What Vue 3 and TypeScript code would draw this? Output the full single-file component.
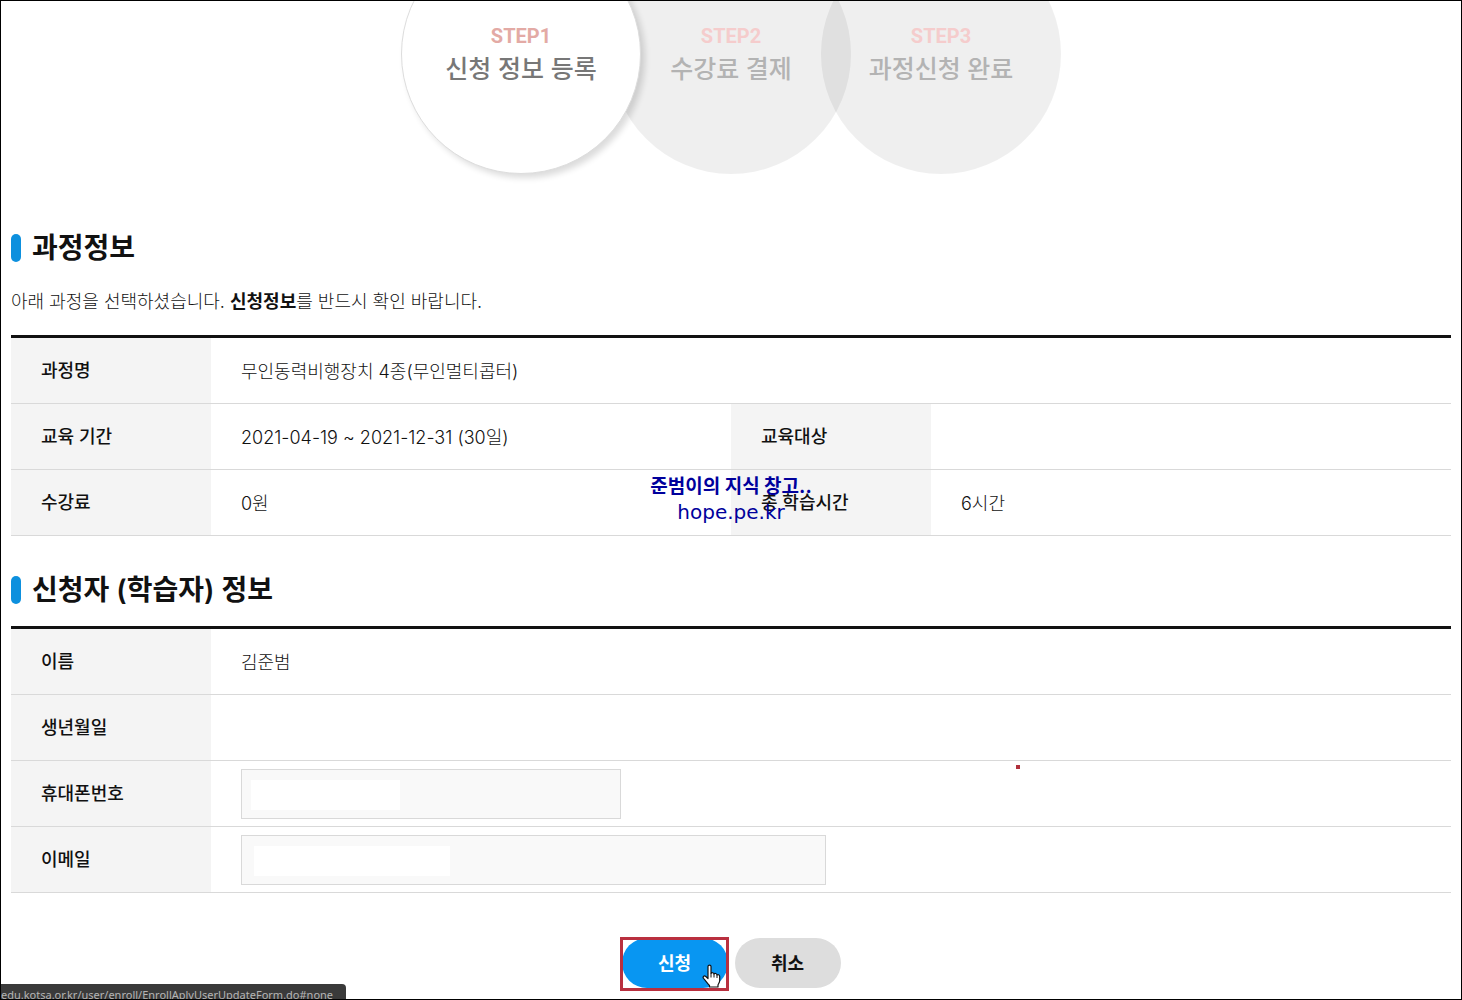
<script setup lang="ts">
import { ref } from 'vue'

interface Step {
  label: string
  title: string
  active: boolean
}

const steps: Step[] = [
  { label: 'STEP1', title: '신청 정보 등록', active: true },
  { label: 'STEP2', title: '수강료 결제', active: false },
  { label: 'STEP3', title: '과정신청 완료', active: false },
]

const phone = ref('')
const email = ref('')
</script>

<template>
  <div class="frame">
    <ol class="steps">
      <li v-for="step in steps" :key="step.label" class="step" :class="{ active: step.active }">
        <span class="step-label">{{ step.label }}</span>
        <span class="step-title">{{ step.title }}</span>
      </li>
    </ol>

    <main class="content">
      <h2 class="heading course-heading">과정정보</h2>
      <p class="notice">아래 과정을 선택하셨습니다. <strong>신청정보</strong>를 반드시 확인 바랍니다.</p>

      <div class="course">
        <table class="info">
          <colgroup>
            <col class="label-col" />
            <col />
            <col class="label-col" />
            <col />
          </colgroup>
          <tbody>
            <tr>
              <th scope="row">과정명</th>
              <td colspan="3">무인동력비행장치 4종(무인멀티콥터)</td>
            </tr>
            <tr>
              <th scope="row">교육 기간</th>
              <td>2021-04-19 ~ 2021-12-31 (30일)</td>
              <th scope="row">교육대상</th>
              <td></td>
            </tr>
            <tr>
              <th scope="row">수강료</th>
              <td>0원</td>
              <th scope="row">총 학습시간</th>
              <td>6시간</td>
            </tr>
          </tbody>
        </table>
        <div class="watermark">
          <span class="watermark-name">준범이의 지식 창고..</span>
          <span class="watermark-site">hope.pe.kr</span>
        </div>
      </div>

      <h2 class="heading applicant-heading">신청자 (학습자) 정보</h2>
      <form @submit.prevent>
        <table class="info">
          <colgroup>
            <col class="label-col" />
            <col />
          </colgroup>
          <tbody>
            <tr>
              <th scope="row">이름</th>
              <td>김준범</td>
            </tr>
            <tr>
              <th scope="row">생년월일</th>
              <td></td>
            </tr>
            <tr>
              <th scope="row"><label for="phone">휴대폰번호</label></th>
              <td class="field-cell">
                <div class="field phone">
                  <input id="phone" v-model="phone" type="tel" />
                  <span class="mask"></span>
                </div>
                <span class="dot"></span>
              </td>
            </tr>
            <tr>
              <th scope="row"><label for="email">이메일</label></th>
              <td class="field-cell">
                <div class="field email">
                  <input id="email" v-model="email" type="email" />
                  <span class="mask"></span>
                </div>
              </td>
            </tr>
          </tbody>
        </table>

        <div class="actions">
          <div class="marked">
            <button type="submit" class="button primary">신청</button>
            <svg class="cursor" viewBox="0 0 20 24" width="20" height="24" aria-hidden="true">
              <path
                d="M6 2.5C6 .6 9 .6 9 2.5V9.5C9.300 8.300 11.800 8.500 12 10C12.600 9 14.800 9.300 15 11C15.800 10.200 17.700 10.600 17.700 12.500V16.500C17.700 18.500 16.500 19.500 16 21V23H7.500V21.500C5.500 19.500 3.500 16.500 1.500 14.300C.3 12.500 2.300 11.300 3.800 12.500L6 14.500Z"
                fill="#fff"
                stroke="#111"
                stroke-width="1.200"
                stroke-linejoin="round"
              />
              <path d="M9 9.500V13.500M12 10V13.500M15 11V14" fill="none" stroke="#111" stroke-width="1" />
            </svg>
          </div>
          <button type="button" class="button">취소</button>
        </div>
      </form>
    </main>

    <div class="status">edu.kotsa.or.kr/user/enroll/EnrollAplyUserUpdateForm.do#none</div>
  </div>
</template>

<style>
body {
  margin: 0;
  background: #fff;
}
</style>

<style scoped>
.frame {
  position: relative;
  box-sizing: border-box;
  min-height: 100vh;
  border: 1px solid #000;
  overflow: hidden;
  color: #111;
  font-family: Inter, 'Noto Sans CJK KR', sans-serif;
  font-size: 18px;
}

.steps {
  display: flex;
  justify-content: center;
  margin: -67px 0 0;
  padding: 0;
  list-style: none;
}

.step {
  box-sizing: border-box;
  display: flex;
  flex-direction: column;
  align-items: center;
  justify-content: center;
  width: 240px;
  height: 240px;
  padding-bottom: 3px;
  border-radius: 50%;
  background: rgba(0, 0, 0, 0.063);
  color: #b3b3b3;
  white-space: nowrap;
}

.step + .step {
  margin-left: -30px;
}

.step.active {
  position: relative;
  z-index: 1;
  border: 1px solid #ddd;
  background: #fff;
  box-shadow: 4px 4px 6px rgba(0, 0, 0, 0.14);
  color: #777;
}

.step-label {
  color: #f5cccc;
  font-family: Roboto, sans-serif;
  font-size: 20px;
  font-weight: 700;
  line-height: 32px;
}

.active .step-label {
  color: #e3aaa5;
}

.step-title {
  font-size: 25px;
  font-weight: 500;
  line-height: 34px;
}

.content {
  padding: 0 10px;
}

.heading {
  display: flex;
  align-items: center;
  gap: 11px;
  margin: 0;
  font-size: 28px;
  font-weight: 600;
  line-height: 40px;
}

.heading::before {
  content: '';
  width: 10px;
  height: 28px;
  border-radius: 5px;
  background: #0d90de;
}

.course-heading {
  margin-top: 54px;
}

.applicant-heading {
  margin: 34px 0 16px;
}

.notice {
  margin: 19px 0 18px;
  font-weight: 300;
  line-height: 30px;
}

.notice strong {
  font-weight: 700;
}

.course {
  position: relative;
}

.info {
  width: 100%;
  border-top: 3px solid #111;
  border-spacing: 0;
  table-layout: fixed;
}

.label-col {
  width: 200px;
}

.info th,
.info td {
  box-sizing: border-box;
  height: 66px;
  padding: 0 30px;
  border-bottom: 1px solid #d9d9d9;
  text-align: left;
}

.info th {
  padding-bottom: 4px;
  background: #f4f4f4;
  font-weight: 500;
}

.info td {
  padding-bottom: 2px;
  font-weight: 300;
}

.info .field-cell {
  position: relative;
  padding-bottom: 0;
}

.field {
  position: relative;
  max-width: 100%;
  height: 50px;
}

.phone {
  width: 380px;
}

.email {
  width: 585px;
}

.field input {
  box-sizing: border-box;
  width: 100%;
  height: 100%;
  padding: 0 12px;
  border: 1px solid #d9d9d9;
  border-radius: 0;
  background: #f9f9f9;
  font: inherit;
}

.mask {
  position: absolute;
  top: 11px;
  left: 10px;
  width: 149px;
  height: 30px;
  background: #fff;
  pointer-events: none;
}

.email .mask {
  left: 13px;
  width: 196px;
}

.dot {
  position: absolute;
  top: 4px;
  left: 805px;
  width: 4px;
  height: 4px;
  background: #b0303c;
}

.watermark {
  position: absolute;
  bottom: 11px;
  left: 50%;
  display: flex;
  flex-direction: column;
  align-items: center;
  transform: translateX(-50%);
  color: #00009c;
  white-space: nowrap;
  pointer-events: none;
}

.watermark-name {
  font-size: 19px;
  font-weight: 700;
  line-height: 24px;
}

.watermark-site {
  font-family: 'DejaVu Sans', sans-serif;
  font-size: 20px;
  line-height: 26px;
}

.actions {
  display: flex;
  justify-content: center;
  gap: 7px;
  margin-top: 45px;
}

.marked {
  position: relative;
}

.marked::after {
  content: '';
  position: absolute;
  inset: -1px -1px -3px -2px;
  border: 3px solid #b9303f;
  pointer-events: none;
}

.button {
  display: block;
  width: 106px;
  height: 50px;
  padding: 0 0 2px;
  border: 0;
  border-radius: 25px;
  background: #ddd;
  color: #111;
  font: inherit;
  font-weight: 600;
}

.primary {
  background: #0896f2;
  color: #fff;
}

.cursor {
  position: absolute;
  right: 6px;
  bottom: 0;
}

.status {
  position: absolute;
  bottom: 0;
  left: 0;
  box-sizing: border-box;
  height: 15px;
  padding-right: 13px;
  border-radius: 0 4px 0 0;
  background: #3a3a3a;
  color: #b5b5b5;
  font-family: 'Noto Sans', sans-serif;
  font-size: 11px;
  line-height: 22px;
  white-space: nowrap;
  overflow: hidden;
}
</style>
